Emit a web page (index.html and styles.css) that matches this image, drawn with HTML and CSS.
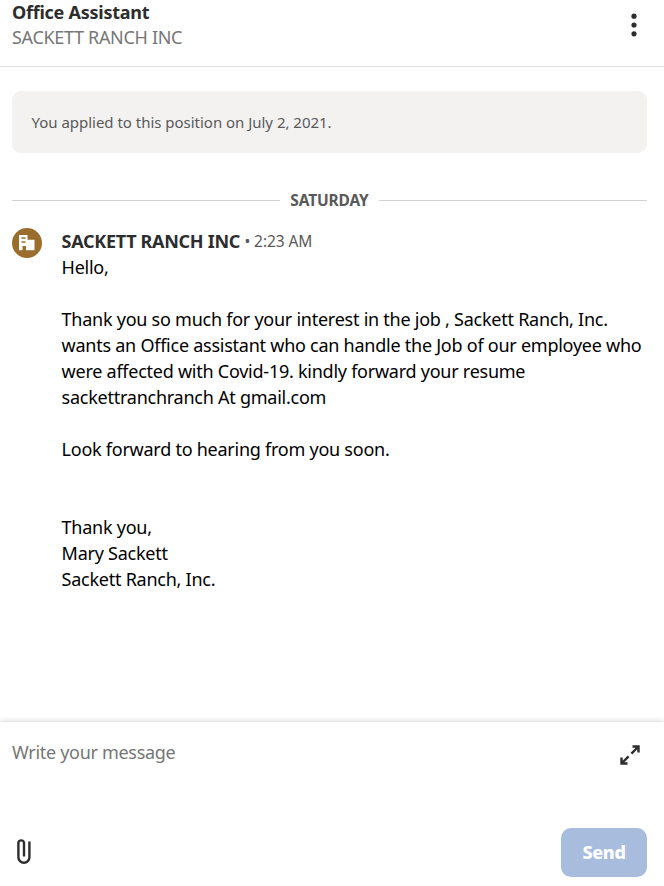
FILE: index.html
```html
<!DOCTYPE html>
<html lang="en">
<head>
  <meta charset="UTF-8">
  <title>Messages</title>
  <link rel="stylesheet" href="styles.css">
</head>

<body>

<div class="header">
  <div class="headerText">
    <h1 class="jobTitle">Office Assistant</h1>
    <p class="company">SACKETT RANCH INC</p>
  </div>
  <button class="iconButton" aria-label="More options">
    <svg class="menuIcon" width="6" height="24" viewBox="0 0 6 24">
      <circle cx="3" cy="3.2" r="2.6"/>
      <circle cx="3" cy="12" r="2.6"/>
      <circle cx="3" cy="20.8" r="2.6"/>
    </svg>
  </button>
</div>

<div class="conversation">
  <div class="notice">You applied to this position on July 2, 2021.</div>

  <div class="dayDivider"><span class="day">SATURDAY</span></div>

  <div class="message">
    <svg class="avatar" width="30" height="30" viewBox="0 0 30 30">
      <circle cx="15" cy="15" r="15" fill="#9b6d2c"/>
      <path fill="#fff" fill-rule="evenodd" d="M7 7h8.500v4.800h7V22.300H14V18h-3.500v4.300H7zM9.500 9.300v1.500h4V9.300zM9.500 13.200v1.500h4v-1.500z"/>
    </svg>
    <div class="messageBody">
      <div class="messageHead">
        <span class="sender">SACKETT RANCH INC</span>
        <span class="time">• 2:23 AM</span>
      </div>
      <p class="messageText">Hello,

Thank you so much for your interest in the job , Sackett Ranch, Inc.
wants an Office assistant who can handle the Job of our employee who
were affected with Covid-19. kindly forward your resume
sackettranchranch At gmail.com

Look forward to hearing from you soon.


Thank you,
Mary Sackett
Sackett Ranch, Inc.</p>
    </div>
  </div>
</div>

<div class="composer">
  <div class="composerTop">
    <span class="placeholder">Write your message</span>
    <button class="iconButton" aria-label="Expand">
      <svg class="expandIcon" width="20" height="20" viewBox="0 0 20 20">
        <path d="M12.500 1.500h6V7.500M18 2l-6.600 6.600M1.500 12.500v6h6M2 18l6.600-6.600"/>
      </svg>
    </button>
  </div>
  <div class="composerBottom">
    <button class="iconButton" aria-label="Attach file">
      <svg class="clipIcon" width="14" height="27" viewBox="0 0 14 27">
        <path d="M7 18.500V4.500a2.900 2.900 0 0 0-5.600 0V19.300a5.500 5.500 0 0 0 11 0V3.500"/>
      </svg>
    </button>
    <button class="sendButton">Send</button>
  </div>
</div>

</body>

</html>
```
FILE: styles.css
```css
* {
  box-sizing: border-box;
}

body {
  margin: 0;
  height: 886px;
  display: flex;
  flex-direction: column;
  overflow: hidden;
  background-color: #fff;
  color: #2d2d2d;
  font-family: "Noto Sans", sans-serif;
  font-size: 18px;
  letter-spacing: -0.25px;
}

.header {
  display: flex;
  justify-content: space-between;
  height: 67px;
  padding: 0 27px 0 12px;
  border-bottom: 1px solid #e4e2e0;
}

.jobTitle {
  margin: 0;
  font-size: 18px;
  font-weight: 700;
  line-height: 25px;
}

.company {
  margin: 0;
  color: #767676;
  line-height: 25px;
  letter-spacing: -0.32px;
}

.iconButton {
  display: flex;
  padding: 0;
  border: none;
  background: none;
  cursor: pointer;
}

.menuIcon {
  margin-top: 13px;
  fill: #2d2d2d;
}

.conversation {
  flex: 1;
  padding: 24px 17px 0 12px;
}

.notice {
  height: 62px;
  padding: 0 19.5px;
  border-radius: 9px;
  background-color: #f3f2f1;
  color: #595959;
  font-size: 15px;
  letter-spacing: -0.02px;
  line-height: 62px;
}

.dayDivider {
  display: flex;
  align-items: center;
  gap: 10px;
  height: 20px;
  margin-top: 37px;
}

.dayDivider::before,
.dayDivider::after {
  content: "";
  flex: 1;
  height: 1px;
  background-color: #d4d2d0;
}

.day {
  color: #595959;
  font-size: 15.5px;
  font-weight: 700;
  letter-spacing: -0.15px;
}

.message {
  display: flex;
  gap: 19.6px;
  margin-top: 18px;
}

.avatar {
  flex: none;
}

.messageHead {
  height: 26px;
  line-height: 26px;
  white-space: nowrap;
}

.sender {
  font-weight: 700;
  letter-spacing: -0.3px;
}

.time {
  position: relative;
  top: -1px;
  color: #595959;
  font-size: 15.5px;
  letter-spacing: -0.1px;
}

.messageText {
  margin: 0;
  color: #000;
  line-height: 26px;
  white-space: pre;
}

.composer {
  display: flex;
  flex-direction: column;
  justify-content: space-between;
  height: 164px;
  padding: 18px 17px 9px 12px;
  box-shadow: 0 -1px 5px rgba(0, 0, 0, 0.16);
}

.composerTop,
.composerBottom {
  display: flex;
  justify-content: space-between;
}

.placeholder {
  color: #767676;
  line-height: 25px;
  letter-spacing: -0.3px;
}

.expandIcon,
.clipIcon {
  fill: none;
  stroke: #2d2d2d;
  stroke-width: 2.4;
}

.expandIcon {
  margin: 4.5px 7.5px 0 0;
}

.clipIcon {
  margin: 0 0 2px 5px;
}

.composerBottom {
  align-items: center;
}

.sendButton {
  width: 86px;
  height: 49px;
  padding: 0 0 2px;
  border: none;
  border-radius: 10px;
  background-color: #a8bcdd;
  color: #fff;
  font-family: inherit;
  font-size: 18px;
  font-weight: 800;
  letter-spacing: -0.3px;
  cursor: pointer;
}
```
